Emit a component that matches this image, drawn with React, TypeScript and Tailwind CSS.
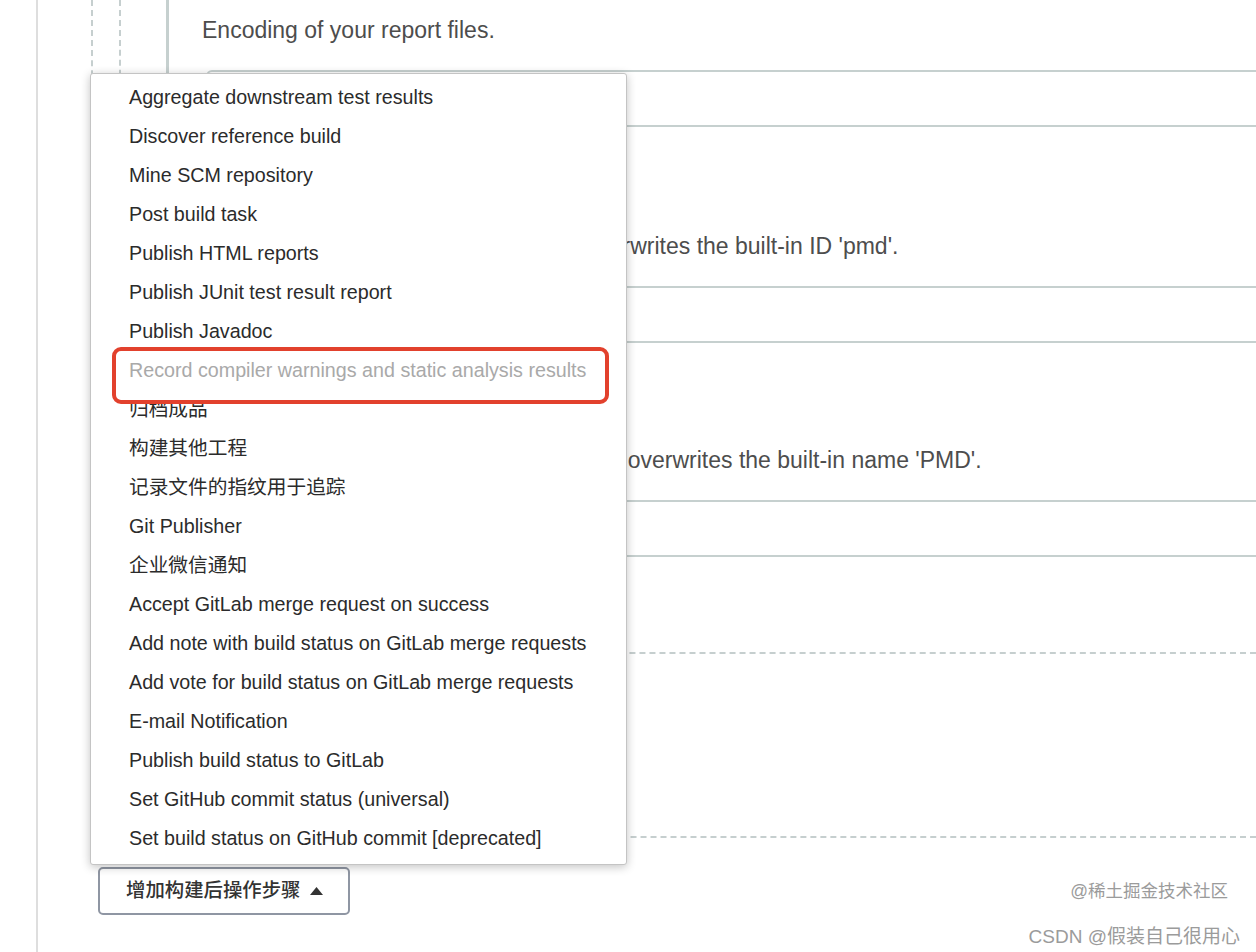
const menuItems = [
  "Aggregate downstream test results",
  "Discover reference build",
  "Mine SCM repository",
  "Post build task",
  "Publish HTML reports",
  "Publish JUnit test result report",
  "Publish Javadoc",
  "Record compiler warnings and static analysis results",
  "归档成品",
  "构建其他工程",
  "记录文件的指纹用于追踪",
  "Git Publisher",
  "企业微信通知",
  "Accept GitLab merge request on success",
  "Add note with build status on GitLab merge requests",
  "Add vote for build status on GitLab merge requests",
  "E-mail Notification",
  "Publish build status to GitLab",
  "Set GitHub commit status (universal)",
  "Set build status on GitHub commit [deprecated]",
];

const HIGHLIGHTED = "Record compiler warnings and static analysis results";

function FieldInput() {
  return <div className="ml-[4px] h-[57px] w-[1200px] shrink-0 rounded-[6px] border-2 border-[#c6d0cf] bg-white" />;
}

function PostBuildMenu() {
  return (
    <div className="absolute left-[90px] top-[73px] z-20 h-[792px] w-[537px] rounded-[3px] border border-[#c4c4c4] bg-white pt-[4px] text-[19.7px] shadow-[0_2px_10px_rgba(0,0,0,0.24)]">
      {menuItems.map((item) =>
        item === HIGHLIGHTED ? (
          <div key={item} className="relative flex h-[39px] items-center pl-[38px]">
            {/* red annotation box drawn over the screenshot */}
            <div className="absolute left-[21px] top-[-4px] z-0 h-[57px] w-[497px] rounded-[9px] border-4 border-[#e2412d] bg-white" />
            <span className="relative z-10 text-[#a9a9a9]">{item}</span>
          </div>
        ) : (
          <div key={item} className="flex h-[39px] items-center pl-[38px] text-[#2b2b2b]">
            {item}
          </div>
        )
      )}
    </div>
  );
}

export default function App() {
  return (
    <div className="relative h-[952px] w-[1256px] overflow-hidden bg-white font-['Liberation_Sans','Noto_Sans_CJK_SC',sans-serif] text-[19.5px]">
      <div className="ml-[36px] h-full border-l-2 border-[#dedede] pl-[53px]">
        {/* outer repeated chunk */}
        <div className="border-b-2 border-l-2 border-dashed border-[#c6cfcf] pb-[182px] pl-[26px]">
          {/* inner repeated chunk */}
          <div className="border-b-2 border-l-2 border-dashed border-[#c6cfcf] pb-[55px] pl-[45px]">
            <div className="border-l-[3px] border-[#c6d0cf] pb-[40px] pl-[33px] pt-[15px] text-[23px] leading-[30px] text-[#4d4d4d]">
              <p className="whitespace-nowrap">Encoding of your report files.</p>
              <div className="mt-[25px]">
                <FieldInput />
              </div>
              <p className="mt-[104px] whitespace-nowrap">This custom ID for the results, this ID overwrites the built-in ID 'pmd'.</p>
              <div className="mt-[25px]">
                <FieldInput />
              </div>
              <p className="mt-[102px] whitespace-nowrap">The custom name of the result, the name overwrites the built-in name 'PMD'.</p>
              <div className="mt-[25px]">
                <FieldInput />
              </div>
            </div>
          </div>
        </div>

        <button className="ml-[7px] mt-[29px] flex h-[48px] w-[252px] items-center rounded-[5px] border-2 border-[#8f96a3] bg-white pl-[26px] text-[19.4px] font-medium text-[#333]">
          <span>增加构建后操作步骤</span>
          <svg width="13" height="8" viewBox="0 0 13 8" className="ml-[9px]">
            <path d="M6.5 0 L13 8 L0 8 Z" fill="#333" />
          </svg>
        </button>
      </div>

      <PostBuildMenu />

      {/* watermark */}
      <div className="absolute bottom-[6px] right-[16px] flex flex-col items-end leading-none text-[#9b9b9b]">
        <span className="mr-[12px] text-[17.5px]">@稀土掘金技术社区</span>
        <span className="mt-[27px] text-[19px]">CSDN @假装自己很用心</span>
      </div>
    </div>
  );
}
